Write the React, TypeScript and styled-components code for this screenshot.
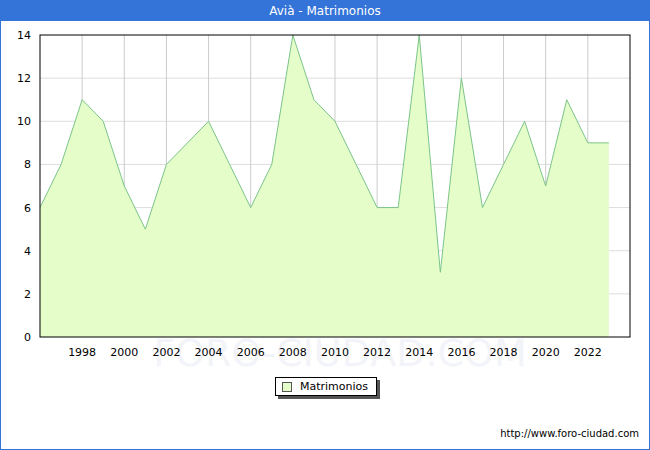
import React from "react";
import styled, { createGlobalStyle } from "styled-components";

const G = createGlobalStyle`
  html,body{margin:0;padding:0;background:#fff;}
  body{font-family:"DejaVu Sans",Verdana,sans-serif;}
`;
const Frame = styled.div`
  width:650px;height:450px;box-sizing:border-box;border:1px solid #3473d8;
  display:flex;flex-direction:column;position:relative;overflow:hidden;
`;
const Title = styled.div`
  height:20px;background:#3473d8;color:#fff;font-size:12px;
  display:flex;align-items:center;justify-content:center;flex:none;
`;
const ChartBox = styled.div`height:350px;flex:none;position:relative;`;
const LegendRow = styled.div`display:flex;justify-content:center;padding-left:2px;margin-top:6px;`;
const Legend = styled.div`
  display:flex;align-items:center;gap:8px;height:17px;padding:0 8px 0 6px;
  border:1px solid #000;background:#fff;font-size:11px;box-shadow:3px 3px 0 #555;
`;
const Swatch = styled.span`width:8px;height:8px;border:1px solid #555;background:#e4fdc9;`;
const Footer = styled.div`
  position:absolute;right:10px;bottom:10px;font-size:10px;color:#000;
`;

const data = [6,8,11,10,7,5,8,9,10,8,6,8,14,11,10,8,6,6,14,3,12,6,8,10,7,11,9,9];
const X0 = 40, X1 = 630, YT = 35, YB = 337;
const px = (i: number) => 40 + i * 21.07;
const py = (v: number) => YB - (v * (YB - YT)) / 14;

export default function App() {
  const line = data.map((v, i) => `${px(i)},${py(v)}`).join(" ");
  const area = `${px(0)},${YB} ${line} ${px(data.length - 1)},${YB}`;
  return (
    <Frame>
      <G />
      <Title>Avià - Matrimonios</Title>
      <ChartBox>
        <svg width="648" height="350" viewBox="1 21 648 350" style={{ display: "block" }}>
          <text x="340" y="366" textAnchor="middle" fontSize="38" fill="#f3f4f9" fontFamily="DejaVu Sans">FORO-CIUDAD.COM</text>
          {[2, 4, 6, 8, 10, 12].map(v => (
            <line key={v} x1={X0} x2={X1} y1={py(v)} y2={py(v)} stroke="#ddd" />
          ))}
          {Array.from({ length: 13 }, (_, k) => px(2 + 2 * k)).map(x => (
            <line key={x} x1={x} x2={x} y1={YT} y2={YB} stroke="#ccc" />
          ))}
          <polygon points={area} fill="#e4fdc9" />
          <polyline points={line} fill="none" stroke="#7cc48a" strokeWidth="1" />
          <rect x={X0} y={YT} width={X1 - X0} height={YB - YT} fill="none" stroke="#000" />
          {[0, 2, 4, 6, 8, 10, 12, 14].map(v => (
            <text key={v} x="31" y={py(v) + 4} textAnchor="end" fontSize="11" fontFamily="DejaVu Sans">{v}</text>
          ))}
          {Array.from({ length: 13 }, (_, k) => k).map(k => (
            <text key={k} x={px(2 + 2 * k)} y="356" textAnchor="middle" fontSize="11" fontFamily="DejaVu Sans">{1998 + 2 * k}</text>
          ))}
        </svg>
      </ChartBox>
      <LegendRow>
        <Legend><Swatch />Matrimonios</Legend>
      </LegendRow>
      <Footer>http://www.foro-ciudad.com</Footer>
    </Frame>
  );
}
